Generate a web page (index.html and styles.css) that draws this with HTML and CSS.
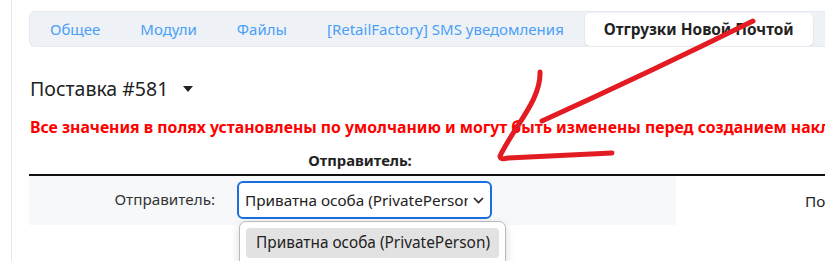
FILE: index.html
```html
<!DOCTYPE html>
<html lang="ru">
<head>
<meta charset="utf-8">
<title>Отгрузки Новой Почтой</title>
<link rel="stylesheet" href="styles.css">
</head>
<body>
<div class="frame">
  <div class="content">
    <nav class="tabs">
      <a class="tab">Общее</a>
      <a class="tab">Модули</a>
      <a class="tab">Файлы</a>
      <a class="tab">[RetailFactory] SMS уведомления</a>
      <a class="tab active">Отгрузки Новой Почтой</a>
    </nav>

    <h2 class="title">Поставка #581 <span class="caret"></span></h2>

    <p class="warn">Все значения в полях установлены по умолчанию и могут быть изменены перед созданием накладной</p>

    <div class="form">
      <div class="head"><span class="head-cell">Отправитель:</span></div>
      <div class="row">
        <div class="label">Отправитель:</div>
        <div class="value">
          <div class="select">
            <span class="select-text">Приватна особа (PrivatePerson)</span>
            <svg class="chev" width="11" height="7" viewBox="0 0 11 7"><path d="M1 1 L5.5 5.5 L10 1" fill="none" stroke="#222" stroke-width="1.6"/></svg>
          </div>
          <div class="popup">
            <div class="option">Приватна особа (PrivatePerson)</div>
          </div>
        </div>
        <div class="right">Поштове відділення</div>
      </div>
    </div>
  </div>
</div>
<svg class="arrow" width="825" height="261" viewBox="0 0 825 261">
  <path d="M753 21 Q650 72 542 121" fill="none" stroke="#e21c22" stroke-width="5" stroke-linecap="round"/>
  <path d="M540 72 C541 100 515 125 500 156 Q500 160 508 158 L612 153" fill="none" stroke="#e21c22" stroke-width="5" stroke-linecap="round" stroke-linejoin="round"/>
</svg>
</body>
</html>
```
FILE: styles.css
```css
html, body {
  margin: 0;
  padding: 0;
  background: #fff;
  overflow: hidden;
}
body {
  font-family: "Noto Sans", "Open Sans", sans-serif;
  color: #222;
  width: 825px;
  height: 261px;
  position: relative;
}
.frame {
  margin-left: 11px;
  border-left: 1px solid #e4e8ee;
  height: 261px;
  padding-left: 17px;
}
.content {
  padding-top: 11px;
}
.tabs {
  display: flex;
  align-items: center;
  height: 36px;
  background: #eef2f7;
  border: 1px solid #e6eaf0;
  border-right: none;
  border-radius: 6px 0 0 6px;
  box-sizing: border-box;
  padding: 0;
  overflow: hidden;
}
.tab {
  flex: none;
  padding: 0 20px;
  font-size: 15px;
  color: #4a9ff5;
  line-height: 33px;
  white-space: nowrap;
}
.tab.active {
  background: #fff;
  color: #222;
  font-weight: 700;
  font-size: 15.4px;
  border-radius: 5px;
  box-shadow: 0 1px 2px rgba(0,0,0,0.14);
  margin-left: 1px;
  padding: 0 19px;
}
.title {
  margin: 29px 0 0 1px;
  font-size: 19.5px;
  font-weight: 400;
  line-height: 26px;
  display: flex;
  align-items: center;
}
.caret {
  display: inline-block;
  margin-left: 15px;
  width: 0;
  height: 0;
  border-left: 5px solid transparent;
  border-right: 5px solid transparent;
  border-top: 6px solid #222;
}
.warn {
  margin: 15px 0 0 1px;
  color: #ff0000;
  font-weight: 700;
  font-size: 15.8px;
  line-height: 20px;
  white-space: nowrap;
}
.form {
  margin-top: 14px;
}
.head {
  border-bottom: 2px solid #111;
  height: 25px;
  box-sizing: border-box;
}
.head-cell {
  display: block;
  width: 662px;
  text-align: center;
  font-weight: 700;
  font-size: 14.8px;
  line-height: 18px;
}
.row {
  display: flex;
  height: 49px;
}
.label {
  flex: none;
  width: 186px;
  padding-right: 10px;
  text-align: right;
  background: #f7f8fa;
  font-size: 15.3px;
  color: #333;
  line-height: 47px;
}
.value {
  flex: none;
  width: 451px;
  background: #f7f8fa;
  position: relative;
  padding: 5px 0 0 12px;
  box-sizing: border-box;
}
.select {
  width: 255px;
  height: 38px;
  box-sizing: border-box;
  border: 2px solid #1a6fe0;
  border-radius: 6px;
  background: #fff;
  display: flex;
  align-items: center;
  padding: 0 6px 0 6px;
  gap: 5px;
}
.select-text {
  flex: 1;
  overflow: hidden;
  white-space: nowrap;
  font-size: 15.3px;
  color: #222;
}
.chev {
  flex: none;
}
.popup {
  position: absolute;
  left: 14px;
  top: 45px;
  width: 267px;
  height: 50px;
  box-sizing: border-box;
  border: 1px solid #b9b9b9;
  border-radius: 7px;
  background: #fff;
  box-shadow: 0 3px 10px rgba(0,0,0,0.15);
  padding: 6px 6px;
  z-index: 2;
}
.option {
  background: #e2e2e2;
  border-radius: 4px;
  height: 30px;
  line-height: 30px;
  padding-left: 10px;
  font-size: 15.4px;
  color: #222;
  white-space: nowrap;
}
.right {
  flex: none;
  padding-left: 129px;
  font-size: 15.3px;
  color: #222;
  line-height: 50px;
  white-space: nowrap;
}
.arrow {
  position: absolute;
  left: 0;
  top: 0;
  pointer-events: none;
  z-index: 5;
}
```
